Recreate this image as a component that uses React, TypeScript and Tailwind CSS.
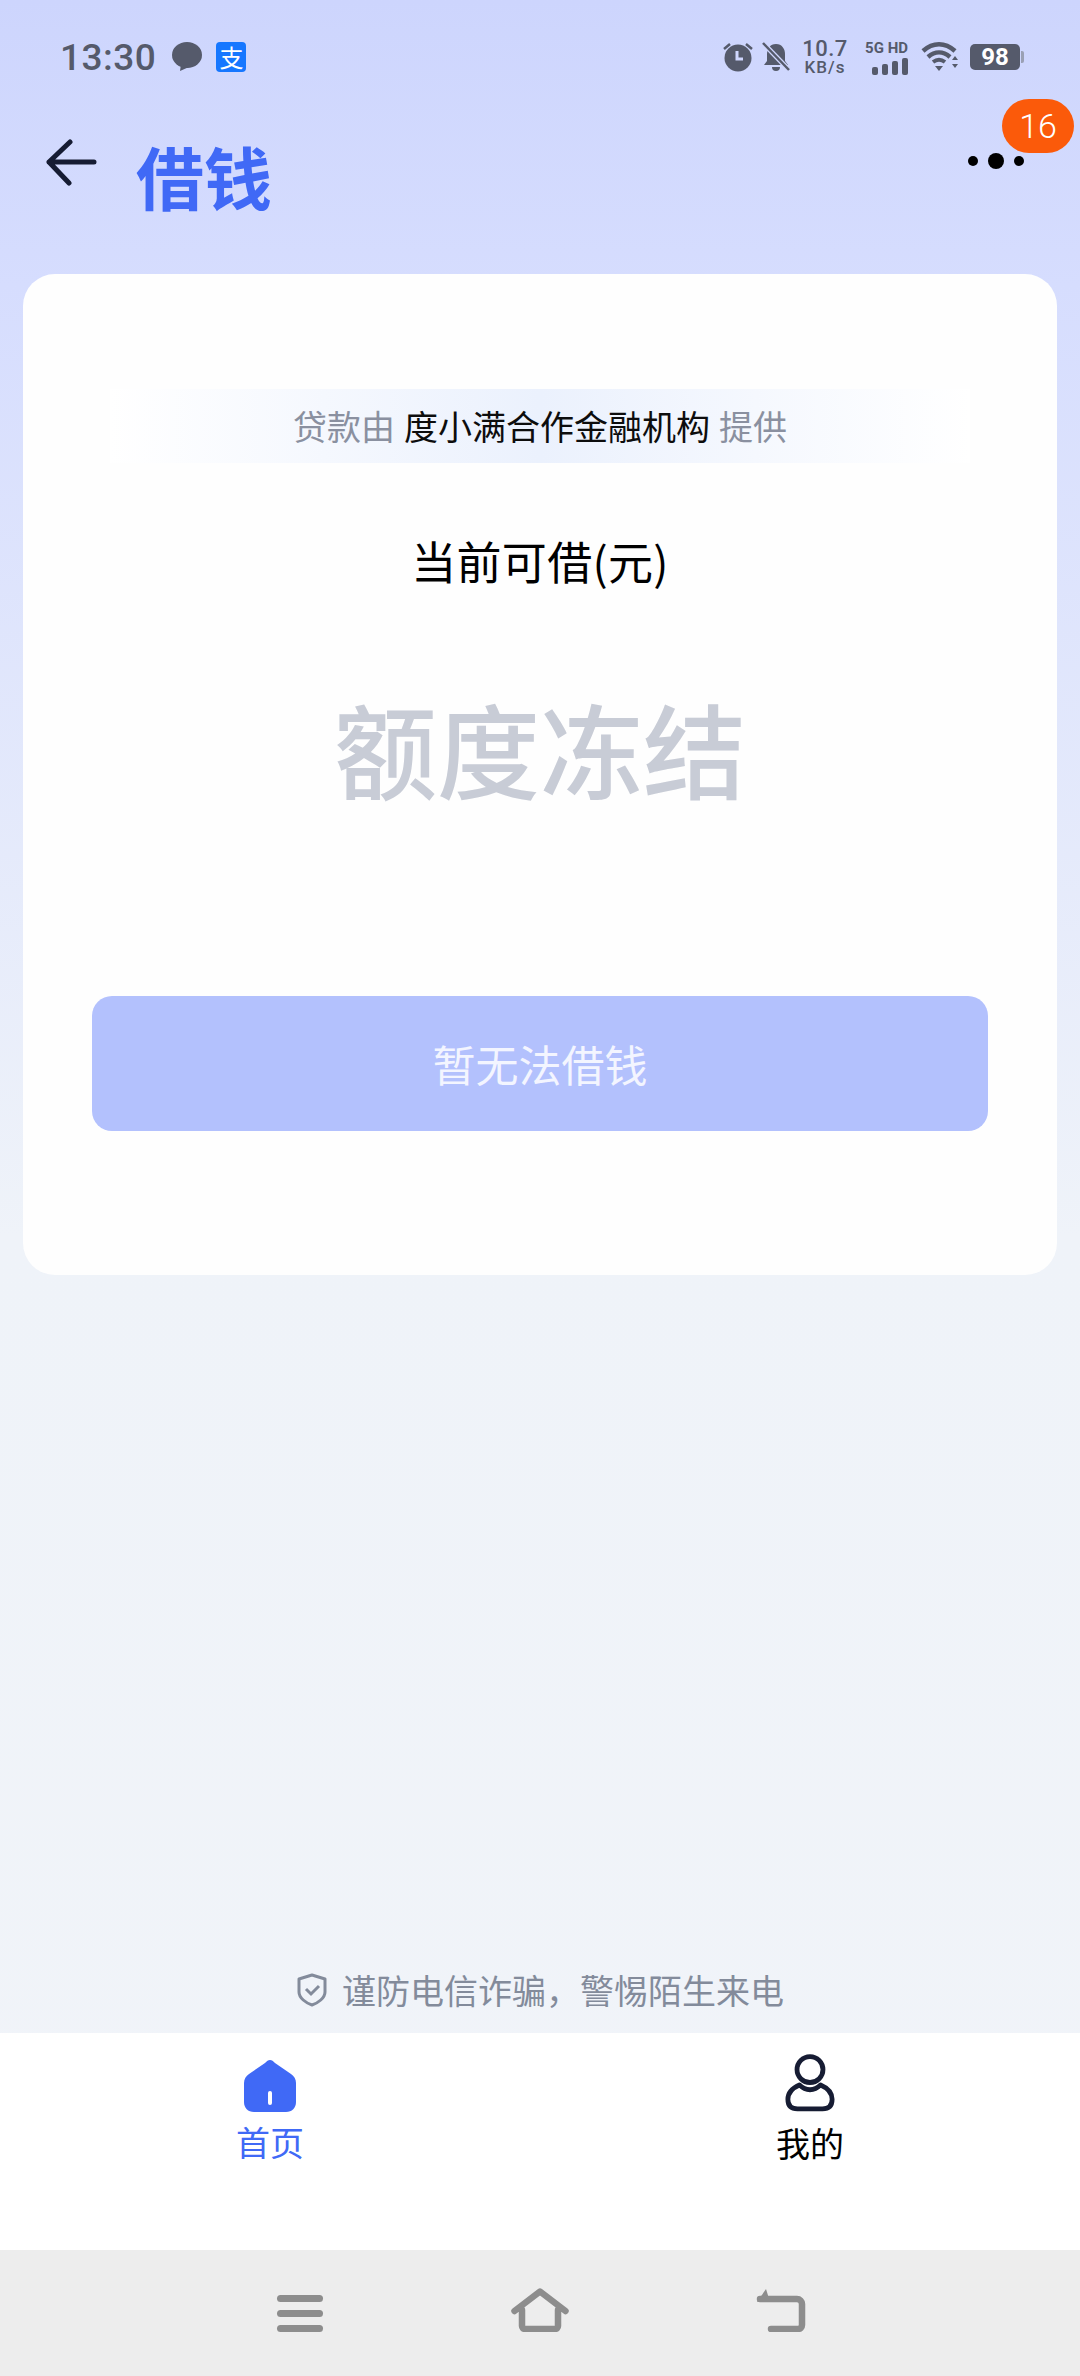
const font = { fontFamily: '"Noto Sans CJK SC", "Noto Sans", sans-serif' };

function StatusBar() {
  const c = "#555a6b";
  return (
    <div className="flex h-[114px] items-center justify-between pl-[60px] pr-[60px] text-[#555a6b]">
      <div className="flex items-center">
        <span className="text-[37px] font-medium leading-none tracking-[0.5px] [font-family:Roboto,sans-serif]">13:30</span>
        <svg className="ml-[15px]" width="32" height="30" viewBox="0 0 32 30">
          <ellipse cx="16" cy="13" rx="15" ry="13" fill={c} />
          <path d="M10 22 L9 29 L18 25Z" fill={c} />
        </svg>
        <div className="ml-[13px] flex h-[30px] w-[30px] items-center justify-center rounded-[4px] bg-[#1677ff] text-[24px] font-normal leading-none text-white">支</div>
      </div>
      <div className="flex items-center">
        <svg width="32" height="30" viewBox="0 0 32 30">
          <circle cx="16" cy="16" r="13.5" fill={c} />
          <path d="M15 9v8h6" stroke="#cfd6fd" strokeWidth="3" fill="none" />
          <path d="M2 7l6-5M30 7l-6-5" stroke={c} strokeWidth="2.5" />
        </svg>
        <svg className="ml-[7px]" width="30" height="30" viewBox="0 0 30 30">
          <path d="M15 2c6 0 9 5 9 10v7l3 4H3l3-4v-7c0-5 3-10 9-10z" fill={c} />
          <path d="M11 25h8a4 4 0 0 1-8 0z" fill={c} />
          <path d="M2 1l26 27" stroke="#cfd6fd" strokeWidth="5" />
          <path d="M2 1l26 27" stroke={c} strokeWidth="2.5" />
        </svg>
        <div className="ml-[11px] flex w-[46px] flex-col items-center leading-none [font-family:Roboto,sans-serif]">
          <span className="text-[22px] font-medium leading-[20px] tracking-[0.5px]">10.7</span>
          <span className="text-[17px] font-medium leading-[17px] tracking-[1px]">KB/s</span>
        </div>
        <div className="ml-[11px] flex w-[49px] flex-col items-end">
          <span className="text-[15px] font-bold leading-[16px] [font-family:Roboto,sans-serif]">5G HD</span>
          <svg className="mt-[2px]" width="36" height="17" viewBox="0 0 36 17">
            <rect x="0" y="9" width="6" height="8" rx="2" fill={c} />
            <rect x="10" y="6" width="6" height="11" rx="2" fill={c} />
            <rect x="20" y="3" width="6" height="14" rx="2" fill={c} />
            <rect x="30" y="0" width="6" height="17" rx="2" fill={c} />
          </svg>
        </div>
        <svg className="ml-[13px]" width="38" height="30" viewBox="0 0 38 30">
          <path d="M2 9C12 0 24 0 34 9" stroke={c} strokeWidth="4.5" fill="none" />
          <path d="M7 15c7-6 15-6 22 0" stroke={c} strokeWidth="4.5" fill="none" />
          <path d="M12 20c4-3 8-3 12 0" stroke={c} strokeWidth="4" fill="none" />
          <path d="M14 24h8l-4 5z" fill={c} />
          <path d="M31 18l3-4 3 4zM31 22h6l-3 4z" fill={c} />
        </svg>
        <div className="ml-[11px] mr-[-4px] flex items-center">
          <div className="flex h-[26px] w-[50px] items-center justify-center rounded-[5px] bg-[#555a6b] text-[24px] font-bold leading-none text-white [font-family:Roboto,sans-serif]">98</div>
          <div className="ml-[1px] h-[12px] w-[3px] rounded-r-[2px] bg-[#9aa0b4]" />
        </div>
      </div>
    </div>
  );
}

function Header() {
  return (
    <div className="relative flex h-[160px] items-start">
      <svg className="ml-[46px] mt-[25px]" width="52" height="48" viewBox="0 0 52 48">
        <path d="M3 23h45M24 3L3 23l20 21" stroke="#161c33" strokeWidth="5" strokeLinecap="round" strokeLinejoin="round" fill="none" />
      </svg>
      <span className="ml-[38px] mt-[20px] text-[68px] font-bold leading-[84px] text-[#4069f6]">借钱</span>
      <div className="absolute left-[968px] top-[39px] flex items-center">
        <span className="h-[10px] w-[10px] rounded-full bg-black" />
        <span className="ml-[10px] h-[16px] w-[16px] rounded-full bg-black" />
        <span className="ml-[10px] h-[10px] w-[10px] rounded-full bg-black" />
      </div>
      <div className="absolute left-[1002px] top-[-15px] flex h-[54px] w-[72px] items-center justify-center rounded-full bg-[#fb5a0a] text-[34px] font-light leading-none text-white [font-family:Roboto,sans-serif]">16</div>
    </div>
  );
}

function Card() {
  return (
    <div className="mx-[23px] flex h-[1001px] flex-col items-center rounded-[32px] bg-[#fefefe]">
      <div className="mt-[115px] flex h-[74px] w-[860px] items-center justify-center bg-gradient-to-r from-white via-[#ebf1fd] to-white text-[34px] leading-none text-[#8a90a0]">
        <span>贷款由</span>
        <span className="mx-[9px] text-[#0d0d0d]">度小满合作金融机构</span>
        <span>提供</span>
      </div>
      <div className="mt-[63px] text-[45px] leading-[70px] tracking-[0.3px] text-black">当前可借(元)</div>
      <div className="mt-[77px] text-[103px] font-medium leading-[150px] text-[#c8ccd6]">额度冻结</div>
      <div className="mt-[173px] flex h-[135px] w-[896px] items-center justify-center rounded-[20px] bg-[#b3c1fd] text-[43px] leading-none text-[#f3f5ff]">暂无法借钱</div>
    </div>
  );
}

function Tip() {
  return (
    <div className="mt-auto flex h-[64px] items-center justify-center pb-[22px] text-[34px] leading-none text-[#838b9b]">
      <svg width="32" height="34" viewBox="0 0 32 34">
        <path d="M16 2l13 4v13c0 6-7 11-13 13C10 30 3 25 3 19V6z" stroke="#838b9b" strokeWidth="3" fill="none" strokeLinejoin="round" />
        <path d="M10 16l5 5 8-8" stroke="#838b9b" strokeWidth="3" fill="none" />
      </svg>
      <span className="ml-[14px]">{"谨防电信诈骗\uFF0C警惕陌生来电"}</span>
    </div>
  );
}

function TabBar() {
  return (
    <div className="flex h-[217px] bg-white">
      <div className="flex flex-1 flex-col items-center">
        <svg className="mt-[27px]" width="52" height="52" viewBox="0 0 52 52">
          <path d="M26 0c2 0 3 1 5 3l16 11c3 2 5 5 5 9v19c0 6-4 10-10 10H10C4 52 0 48 0 42V23c0-4 2-7 5-9L21 3c2-2 3-3 5-3z" fill="#4069f6" />
          <rect x="24" y="31" width="4" height="14" rx="2" fill="#fff" />
        </svg>
        <span className="mt-[10px] text-[34px] leading-[40px] text-[#4069f6]">首页</span>
      </div>
      <div className="flex flex-1 flex-col items-center">
        <svg className="mt-[21px]" width="50" height="58" viewBox="0 0 52 60">
          <circle cx="26" cy="16" r="13.5" stroke="#161c33" strokeWidth="5" fill="none" />
          <path d="M15 32c-7 3-12 8-12 15 0 7 4 10 10 10h26c6 0 10-3 10-10 0-7-5-12-12-15-3 3-7 5-11 5s-8-2-11-5z" stroke="#161c33" strokeWidth="5" fill="none" strokeLinejoin="round" />
        </svg>
        <span className="mt-[11px] text-[34px] leading-[40px] text-black">我的</span>
      </div>
    </div>
  );
}

function NavBar() {
  return (
    <div className="flex h-[126px] items-start bg-[#ededed] pl-[277px] pt-[38px]">
      <div className="mt-[7px] flex h-[37px] w-[46px] flex-col justify-between">
        <div className="h-[7px] rounded-full bg-[#8d8d8d]" />
        <div className="h-[7px] rounded-full bg-[#8d8d8d]" />
        <div className="h-[7px] rounded-full bg-[#8d8d8d]" />
      </div>
      <svg className="ml-[188px]" width="58" height="44" viewBox="0 0 58 44">
        <path d="M3.5 23L29 3.5 54.5 23M11 22v16a3 3 0 0 0 3 3h30a3 3 0 0 0 3-3V22" stroke="#8d8d8d" strokeWidth="6.5" fill="none" strokeLinecap="round" strokeLinejoin="round" />
      </svg>
      <svg className="ml-[187px]" width="50" height="44" viewBox="0 0 50 44">
        <path d="M4 11h37a5 5 0 0 1 5 5v21a4 4 0 0 1-4 4H15" stroke="#8d8d8d" strokeWidth="6.5" fill="none" strokeLinecap="round" />
        <path d="M10 1L1 14h13z" fill="#8d8d8d" />
      </svg>
    </div>
  );
}

export default function App() {
  return (
    <div style={font} className="flex h-[2376px] w-[1080px] flex-col overflow-hidden bg-[linear-gradient(180deg,#cdd5fd_0%,#d6ddfe_12%,#eff3f9_52%,#f1f4f9_100%)]">
      <StatusBar />
      <Header />
      <Card />
      <Tip />
      <TabBar />
      <NavBar />
    </div>
  );
}
